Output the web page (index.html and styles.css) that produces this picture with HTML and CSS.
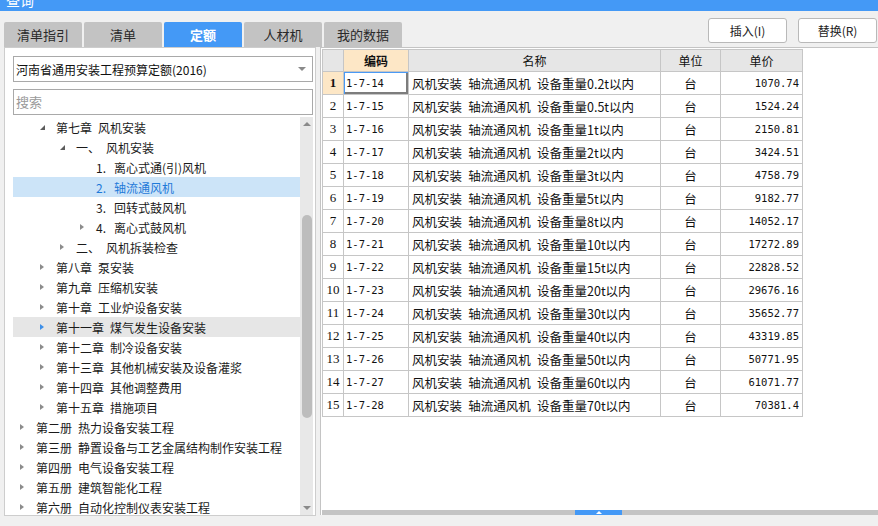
FILE: index.html
```html
<!DOCTYPE html>
<html lang="zh-CN">
<head>
<meta charset="utf-8">
<title>查询</title>
<link rel="stylesheet" href="styles.css">
</head>
<body>
<div class="titlebar"><span class="title">查询</span></div>
<div class="toolbar">
  <div class="tabs">
    <div class="tab">清单指引</div>
    <div class="tab">清单</div>
    <div class="tab active">定额</div>
    <div class="tab">人材机</div>
    <div class="tab">我的数据</div>
  </div>
  <div class="actions">
    <button class="btn">插入(I)</button>
    <button class="btn">替换(R)</button>
  </div>
</div>
<div class="content">
  <div class="left">
    <div class="select"><span>河南省通用安装工程预算定额(2016)</span><span class="caret"></span></div>
    <div class="search">搜索</div>
    <div class="tree-wrap">
      <div class="tree">
        <div class="node l1"><span class="tw open"></span><span class="lbl">第七章&ensp;风机安装</span></div>
        <div class="node l2"><span class="tw open"></span><span class="lbl">一、&ensp;风机安装</span></div>
        <div class="node l3"><span class="tw"></span><span class="lbl"><span class="num">1.</span>离心式通(引)风机</span></div>
        <div class="node l3 selected"><span class="tw"></span><span class="lbl"><span class="num">2.</span>轴流通风机</span></div>
        <div class="node l3"><span class="tw"></span><span class="lbl"><span class="num">3.</span>回转式鼓风机</span></div>
        <div class="node l3"><span class="tw closed"></span><span class="lbl"><span class="num">4.</span>离心式鼓风机</span></div>
        <div class="node l2"><span class="tw closed"></span><span class="lbl">二、&ensp;风机拆装检查</span></div>
        <div class="node l1"><span class="tw closed"></span><span class="lbl">第八章&ensp;泵安装</span></div>
        <div class="node l1"><span class="tw closed"></span><span class="lbl">第九章&ensp;压缩机安装</span></div>
        <div class="node l1"><span class="tw closed"></span><span class="lbl">第十章&ensp;工业炉设备安装</span></div>
        <div class="node l1 hover"><span class="tw closed"></span><span class="lbl">第十一章&ensp;煤气发生设备安装</span></div>
        <div class="node l1"><span class="tw closed"></span><span class="lbl">第十二章&ensp;制冷设备安装</span></div>
        <div class="node l1"><span class="tw closed"></span><span class="lbl">第十三章&ensp;其他机械安装及设备灌浆</span></div>
        <div class="node l1"><span class="tw closed"></span><span class="lbl">第十四章&ensp;其他调整费用</span></div>
        <div class="node l1"><span class="tw closed"></span><span class="lbl">第十五章&ensp;措施项目</span></div>
        <div class="node l0"><span class="tw closed"></span><span class="lbl">第二册&ensp;热力设备安装工程</span></div>
        <div class="node l0"><span class="tw closed"></span><span class="lbl">第三册&ensp;静置设备与工艺金属结构制作安装工程</span></div>
        <div class="node l0"><span class="tw closed"></span><span class="lbl">第四册&ensp;电气设备安装工程</span></div>
        <div class="node l0"><span class="tw closed"></span><span class="lbl">第五册&ensp;建筑智能化工程</span></div>
        <div class="node l0"><span class="tw closed"></span><span class="lbl">第六册&ensp;自动化控制仪表安装工程</span></div>
      </div>
      <div class="vscroll">
        <span class="arrow up"></span>
        <div class="vtrack"><div class="vthumb"></div></div>
        <span class="arrow down"></span>
      </div>
    </div>
  </div>
  <div class="right">
    <div class="grid-area">
      <table class="grid">
        <colgroup>
          <col class="c-no"><col class="c-code"><col class="c-name"><col class="c-unit"><col class="c-price">
        </colgroup>
        <thead>
          <tr><th></th><th class="sel">编码</th><th>名称</th><th>单位</th><th>单价</th></tr>
        </thead>
        <tbody>
          <tr><td class="no cur">1</td><td class="code focus">1-7-14</td><td class="name">风机安装&ensp;轴流通风机&ensp;设备重量0.2t以内</td><td class="unit">台</td><td class="price">1070.74</td></tr>
          <tr><td class="no">2</td><td class="code">1-7-15</td><td class="name">风机安装&ensp;轴流通风机&ensp;设备重量0.5t以内</td><td class="unit">台</td><td class="price">1524.24</td></tr>
          <tr><td class="no">3</td><td class="code">1-7-16</td><td class="name">风机安装&ensp;轴流通风机&ensp;设备重量1t以内</td><td class="unit">台</td><td class="price">2150.81</td></tr>
          <tr><td class="no">4</td><td class="code">1-7-17</td><td class="name">风机安装&ensp;轴流通风机&ensp;设备重量2t以内</td><td class="unit">台</td><td class="price">3424.51</td></tr>
          <tr><td class="no">5</td><td class="code">1-7-18</td><td class="name">风机安装&ensp;轴流通风机&ensp;设备重量3t以内</td><td class="unit">台</td><td class="price">4758.79</td></tr>
          <tr><td class="no">6</td><td class="code">1-7-19</td><td class="name">风机安装&ensp;轴流通风机&ensp;设备重量5t以内</td><td class="unit">台</td><td class="price">9182.77</td></tr>
          <tr><td class="no">7</td><td class="code">1-7-20</td><td class="name">风机安装&ensp;轴流通风机&ensp;设备重量8t以内</td><td class="unit">台</td><td class="price">14052.17</td></tr>
          <tr><td class="no">8</td><td class="code">1-7-21</td><td class="name">风机安装&ensp;轴流通风机&ensp;设备重量10t以内</td><td class="unit">台</td><td class="price">17272.89</td></tr>
          <tr><td class="no">9</td><td class="code">1-7-22</td><td class="name">风机安装&ensp;轴流通风机&ensp;设备重量15t以内</td><td class="unit">台</td><td class="price">22828.52</td></tr>
          <tr><td class="no">10</td><td class="code">1-7-23</td><td class="name">风机安装&ensp;轴流通风机&ensp;设备重量20t以内</td><td class="unit">台</td><td class="price">29676.16</td></tr>
          <tr><td class="no">11</td><td class="code">1-7-24</td><td class="name">风机安装&ensp;轴流通风机&ensp;设备重量30t以内</td><td class="unit">台</td><td class="price">35652.77</td></tr>
          <tr><td class="no">12</td><td class="code">1-7-25</td><td class="name">风机安装&ensp;轴流通风机&ensp;设备重量40t以内</td><td class="unit">台</td><td class="price">43319.85</td></tr>
          <tr><td class="no">13</td><td class="code">1-7-26</td><td class="name">风机安装&ensp;轴流通风机&ensp;设备重量50t以内</td><td class="unit">台</td><td class="price">50771.95</td></tr>
          <tr><td class="no">14</td><td class="code">1-7-27</td><td class="name">风机安装&ensp;轴流通风机&ensp;设备重量60t以内</td><td class="unit">台</td><td class="price">61071.77</td></tr>
          <tr><td class="no">15</td><td class="code">1-7-28</td><td class="name">风机安装&ensp;轴流通风机&ensp;设备重量70t以内</td><td class="unit">台</td><td class="price">70381.4</td></tr>
        </tbody>
      </table>
    </div>
    <div class="hscroll"><span class="hthumb"><span class="uptri"></span></span></div>
  </div>
</div>
</body>
</html>
```

FILE: styles.css
```css
* { box-sizing: border-box; }
html, body { margin: 0; padding: 0; }
body {
  width: 878px;
  height: 526px;
  overflow: hidden;
  background: #f0f0f0;
  font-family: "Noto Sans CJK SC", "Noto Sans", sans-serif;
  font-size: 12px;
  color: #1a1a1a;
}

.titlebar {
  height: 11px;
  background: #4499f6;
  overflow: hidden;
}
.title {
  display: block;
  color: #fff;
  font-size: 14px;
  line-height: 14px;
  margin-top: -7px;
  padding-left: 6px;
}

.toolbar {
  height: 36px;
  display: flex;
  justify-content: space-between;
}
.tabs {
  display: flex;
  gap: 2px;
  align-self: flex-end;
  padding-left: 4px;
}
.tab {
  width: 78px;
  height: 25px;
  line-height: 25px;
  text-align: center;
  background: #c3c3c3;
  border-radius: 2px 2px 0 0;
  color: #2a2a2a;
  font-size: 13px;
}
.tab.active {
  background: #4499f6;
  color: #fff;
  font-weight: bold;
}
.actions {
  display: flex;
  gap: 11px;
  padding-top: 7px;
  padding-right: 1px;
}
.btn {
  width: 79px;
  height: 25px;
  background: #fff;
  border: 1px solid #b9b9b9;
  border-radius: 3px;
  font: 12px "Noto Sans CJK SC", sans-serif;
  color: #222;
  padding: 0;
}

.content {
  display: flex;
  height: 469px;
  padding-left: 4px;
  gap: 4px;
}

/* left panel */
.left {
  width: 312px;
  height: 469px;
  background: #fff;
  border: 1px solid #cdcdcd;
  padding: 8px 2px 0 8px;
  display: flex;
  flex-direction: column;
}
.select {
  height: 26px;
  border: 1px solid #a9a9a9;
  display: flex;
  align-items: center;
  justify-content: space-between;
  padding: 0 6px 0 2px;
  color: #111;
}
.caret {
  width: 0;
  height: 0;
  border-left: 4px solid transparent;
  border-right: 4px solid transparent;
  border-top: 4px solid #8a8a8a;
}
.search {
  height: 26px;
  margin-top: 7px;
  border: 1px solid #a9a9a9;
  line-height: 24px;
  padding-left: 2px;
  color: #9a9a9a;
  font-size: 13px;
}
.tree-wrap {
  flex: 1;
  min-height: 0;
  margin-top: 2px;
  display: flex;
  overflow: hidden;
}
.tree {
  flex: 1;
  overflow: hidden;
}
.node {
  height: 20px;
  display: flex;
  align-items: center;
  white-space: pre;
  color: #1a1a1a;
}
.node.l0 { padding-left: 7px; }
.node.l1 { padding-left: 27px; }
.node.l2 { padding-left: 47px; }
.node.l3 { padding-left: 67px; }
.node.selected { background: #cce4f8; }
.node.selected .lbl { color: #1f7ad9; }
.node.hover { background: #e6e6e6; }
.tw {
  width: 16px;
  height: 20px;
  flex: none;
  position: relative;
}
.tw.closed::before {
  content: "";
  position: absolute;
  left: 0;
  top: 6.5px;
  border-left: 4px solid #8c8c8c;
  border-top: 3.5px solid transparent;
  border-bottom: 3.5px solid transparent;
}
.node.hover .tw.closed::before { border-left-color: #3d8fe8; }
.tw.open::before {
  content: "";
  position: absolute;
  left: 0;
  top: 8px;
  border-bottom: 5px solid #5c5c5c;
  border-left: 5px solid transparent;
}
.num {
  display: inline-block;
  width: 18px;
}

.vscroll {
  width: 13px;
  flex: none;
  background: #e8e8e8;
  display: flex;
  flex-direction: column;
  align-items: center;
}
.arrow {
  width: 0;
  height: 0;
  border-left: 4px solid transparent;
  border-right: 4px solid transparent;
}
.arrow.up { border-bottom: 4px solid #8a8a8a; margin-top: 5px; }
.arrow.down { border-top: 4px solid #8a8a8a; margin-bottom: 5px; }
.vtrack {
  flex: 1;
  width: 100%;
  padding-top: 89px;
}
.vthumb {
  width: 10px;
  height: 203px;
  margin-left: 2px;
  background: #bdbdbd;
  border-radius: 5px;
}

/* right panel */
.right {
  flex: 1;
  height: 468px;
  background: #fff;
  border-top: 1px solid #c4c4c4;
  border-left: 1px solid #c4c4c4;
  display: flex;
  flex-direction: column;
}
.grid-area {
  flex: 1;
  padding: 1px 0 0 1px;
  overflow: hidden;
}
.grid {
  border-collapse: collapse;
  table-layout: fixed;
  width: 481px;
}
.c-no { width: 21px; }
.c-code { width: 65px; }
.c-name { width: 252px; }
.c-unit { width: 60px; }
.c-price { width: 82px; }
.grid th, .grid td {
  border: 1px solid #c6c6c6;
  padding: 0;
  white-space: nowrap;
  overflow: hidden;
}
.grid th {
  height: 22px;
  background: #e6e6e6;
  font-weight: normal;
  font-size: 12px;
  color: #111;
}
.grid th.sel {
  background: #fde7c6;
  font-weight: bold;
}
.grid td {
  height: 23px;
  color: #111;
}
.grid td.no {
  text-align: center;
  font-family: "Liberation Serif", serif;
  font-size: 13px;
}
.grid td.no.cur {
  background: #fde7c6;
  font-weight: bold;
}
.grid td.code {
  padding-left: 2px;
  font-family: "DejaVu Sans Mono", monospace;
  font-size: 10.5px;
}
.grid td.focus {
  box-shadow: inset 1px 1px 0 #4a9af5, inset -2px -2px 0 #7d7d7d;
}
.grid td.name {
  padding-left: 3px;
  font-size: 12.5px;
}
.grid td.unit {
  text-align: center;
  font-size: 12.5px;
}
.grid td.price {
  text-align: right;
  padding-right: 3px;
  font-family: "DejaVu Sans Mono", monospace;
  font-size: 10.5px;
}

.hscroll {
  height: 5px;
  margin-left: 1px;
  background: #c4c4c4;
  display: flex;
  padding-left: 253px;
}
.hthumb {
  width: 47px;
  height: 5px;
  background: #4499f6;
  display: flex;
  justify-content: center;
  align-items: center;
}
.uptri {
  width: 0;
  height: 0;
  border-left: 3px solid transparent;
  border-right: 3px solid transparent;
  border-bottom: 3px solid #fff;
}
```
